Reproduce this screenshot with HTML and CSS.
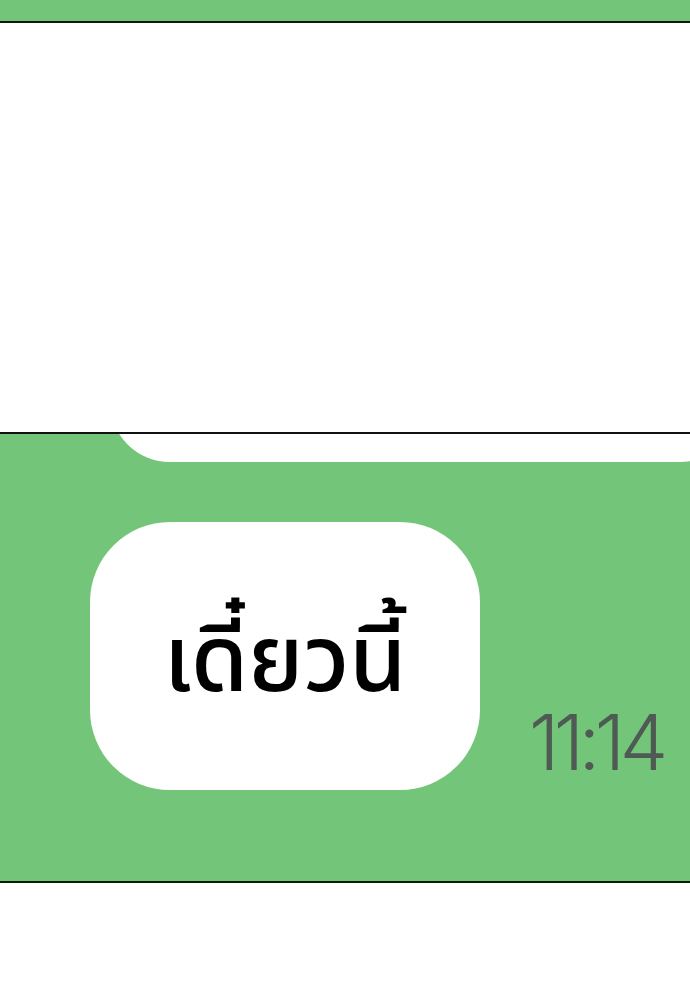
FILE: index.html
```html
<!DOCTYPE html>
<html lang="th">
<head>
    <meta charset="UTF-8">
    <meta name="viewport" content="width=device-width, initial-scale=1.0">
    <title>แชท</title>
    <link rel="stylesheet" href="styles.css">
</head>
<body>
    <div class="top-band"></div>

    <div class="blank"></div>

    <div class="chat-panel">
        <div class="bubble bubble-prev"></div>
        <div class="message-row">
            <div class="bubble bubble-msg">
                <span class="msg-text">เดี๋ยวนี้</span>
            </div>
            <span class="msg-time">11:14</span>
        </div>
    </div>
</body>
</html>
```

FILE: styles.css
```css
body {
    margin: 0;
    background-color: #fff;
    font-family: 'Noto Sans Thai', 'Noto Sans', sans-serif;
}

.top-band {
    height: 21px;
    background-color: #73c579;
    border-bottom: 2px solid #0d1a0e;
}

.blank {
    height: 409px;
}

.chat-panel {
    height: 447px;
    background-color: #73c579;
    border-top: 2px solid #111;
    border-bottom: 2px solid #0d1a0e;
    padding-left: 90px;
    overflow: hidden;
}

.bubble {
    background-color: #fff;
    border-radius: 80px;
}

/* tail of the previous message, cut off by the panel top */
.bubble-prev {
    width: 630px;
    height: 120px;
    margin-top: -92px;
    margin-left: 20px;
    border-radius: 75px;
}

.message-row {
    display: flex;
    align-items: flex-end;
    margin-top: 60px;
}

.bubble-msg {
    width: 390px;
    height: 268px;
    display: flex;
    justify-content: center;
    align-items: center;
}

.msg-text {
    padding-top: 14px;
    font-size: 92px;
    font-weight: 500;
    color: #000;
    line-height: 1;
}

.msg-time {
    margin-left: 49px;
    margin-bottom: 9px;
    font-family: Inter, sans-serif;
    font-weight: 300;
    font-size: 77px;
    letter-spacing: -5.5px;
    color: #4e5a53;
    line-height: 1;
}
```
